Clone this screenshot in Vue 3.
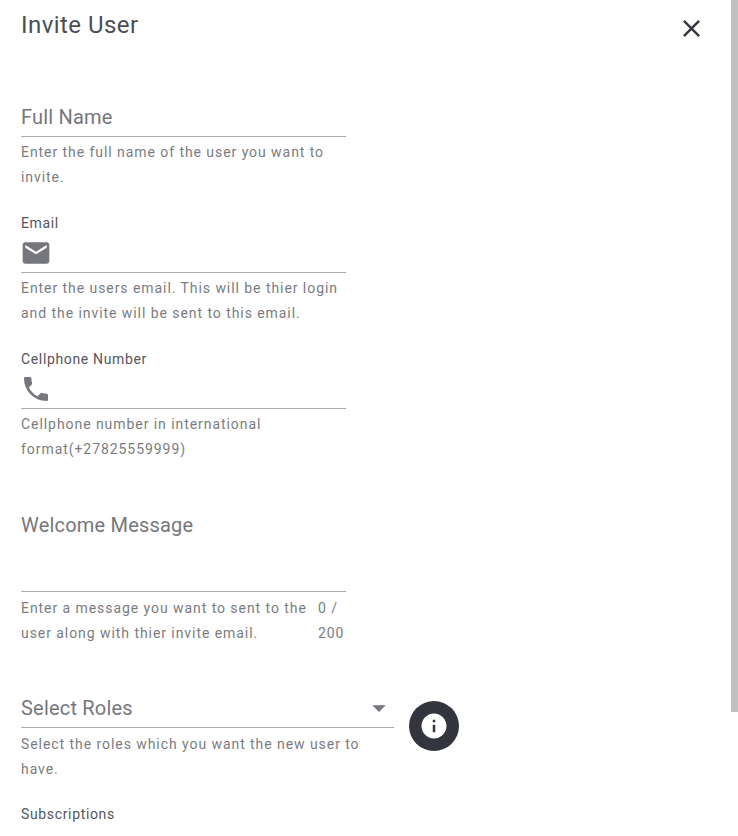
<template>
  <div class="page">
    <div class="scroll-thumb"></div>
    <header class="head">
      <h1 class="title">Invite User</h1>
      <button class="close" type="button" aria-label="Close">
        <svg viewBox="0 0 24 24" width="29" height="29"><path d="M19 6.41L17.59 5 12 10.59 6.41 5 5 6.41 10.59 12 5 17.59 6.41 19 12 13.41 17.59 19 19 17.59 13.41 12z" /></svg>
      </button>
    </header>

    <div class="field first">
      <div class="control plain">
        <span class="big-label">Full Name</span>
      </div>
      <p class="hint">Enter the full name of the user you want to invite.</p>
    </div>

    <div class="field">
      <label class="small-label">Email</label>
      <div class="control">
        <svg class="icon" viewBox="0 0 24 24" width="32" height="32"><path d="M20 4H4c-1.1 0-1.99.9-1.99 2L2 18c0 1.1.9 2 2 2h16c1.100 0 2-.9 2-2V6c0-1.100-.9-2-2-2zm0 4l-8 5-8-5V6l8 5 8-5v2z" /></svg>
      </div>
      <p class="hint">Enter the users email. This will be thier login and the invite will be sent to this email.</p>
    </div>

    <div class="field">
      <label class="small-label">Cellphone Number</label>
      <div class="control">
        <svg class="icon" viewBox="0 0 24 24" width="32" height="32"><path d="M6.62 10.79c1.44 2.83 3.76 5.14 6.59 6.59l2.2-2.2c.27-.27.67-.36 1.02-.24 1.12.37 2.33.57 3.57.57.55 0 1 .45 1 1V20c0 .55-.45 1-1 1-9.39 0-17-7.61-17-17 0-.55.45-1 1-1h3.5c.55 0 1 .45 1 1 0 1.250.2 2.450.57 3.570.11.350.03.740-.25 1.020l-2.2 2.2z" /></svg>
      </div>
      <p class="hint">Cellphone number in international format(+27825559999)</p>
    </div>

    <div class="field message">
      <div class="control textarea">
        <span class="big-label">Welcome Message</span>
      </div>
      <div class="hint-row">
        <p class="hint">Enter a message you want to sent to the user along with thier invite email.</p>
        <span class="counter">0 / 200</span>
      </div>
    </div>

    <div class="roles">
      <div class="field select">
        <div class="control plain">
          <span class="big-label">Select Roles</span>
          <svg class="arrow" viewBox="0 0 24 24" width="32" height="32"><path d="M7 10l5 5 5-5z" /></svg>
        </div>
        <p class="hint">Select the roles which you want the new user to have.</p>
      </div>
      <button class="info" type="button" aria-label="Info">
        <svg viewBox="0 0 24 24" width="30" height="30"><path d="M12 2C6.480 2 2 6.480 2 12s4.480 10 10 10 10-4.480 10-10S17.520 2 12 2zm1 15h-2v-6h2v6zm0-8h-2V7h2v2z" /></svg>
      </button>
    </div>

    <div class="field subs">
      <label class="small-label">Subscriptions</label>
    </div>
  </div>
</template>

<script setup>
</script>

<style>
html, body {
  margin: 0;
  background: #fff;
  overflow: hidden;
}
</style>

<style scoped>
.page {
  position: relative;
  width: 738px;
  height: 836px;
  overflow: hidden;
  box-sizing: border-box;
  padding: 0 32px 0 21px;
  background: #fff;
  font-family: Roboto, "Liberation Sans", sans-serif;
}

.scroll-thumb {
  position: absolute;
  top: 0;
  right: 0;
  width: 7px;
  height: 712px;
  background: #c1c1c1;
}

.head {
  display: flex;
  justify-content: space-between;
  align-items: flex-start;
  height: 77px;
}

.title {
  margin: 11px 0 0;
  font-size: 24px;
  line-height: 28px;
  font-weight: 400;
  letter-spacing: 0.45px;
  color: #4b4e55;
}

.close {
  margin: 14px 0 0;
  padding: 0;
  width: 29px;
  height: 29px;
  border: 0;
  background: none;
}

.close svg {
  display: block;
  fill: #33353e;
}

.field {
  width: 325px;
  margin-bottom: 23px;
}

.control {
  display: flex;
  align-items: center;
  height: 39px;
  border-bottom: 1px solid #a9a9a9;
}

.control.plain {
  height: 59px;
  align-items: flex-end;
}

.control.textarea {
  height: 86px;
  align-items: flex-start;
  padding-top: 20px;
}

.big-label {
  font-size: 20px;
  line-height: 38px;
  letter-spacing: 0.2px;
  color: #76777d;
}

.textarea .big-label {
  line-height: 40px;
}

.small-label {
  display: block;
  font-size: 14px;
  line-height: 20px;
  letter-spacing: 0.65px;
  color: #54565c;
}

.icon {
  display: block;
  margin-left: -1px;
  fill: #76777d;
}

.hint {
  margin: 3px 0 0;
  font-size: 14px;
  line-height: 25px;
  letter-spacing: 0.94px;
  color: #7b7c82;
}

.hint-row {
  display: flex;
  justify-content: space-between;
}

.hint-row .hint {
  width: 291px;
  margin-top: 4px;
}

.counter {
  width: 28px;
  margin-top: 4px;
  font-size: 14px;
  line-height: 25px;
  letter-spacing: 0.94px;
  color: #7b7c82;
}

.roles {
  display: flex;
  align-items: flex-start;
}

.select {
  width: 373px;
  margin-bottom: 22px;
}

.select .hint {
  margin-top: 4px;
}

.select .control {
  position: relative;
  height: 58px;
}

.arrow {
  position: absolute;
  right: -1px;
  top: 23px;
  fill: #76777d;
}

.info {
  display: flex;
  align-items: center;
  justify-content: center;
  flex: none;
  width: 50px;
  height: 50px;
  margin: 32px 0 0 15px;
  padding: 0;
  border: 0;
  border-radius: 50%;
  background: #33353e;
}

.info svg {
  display: block;
  fill: #fff;
}
</style>
